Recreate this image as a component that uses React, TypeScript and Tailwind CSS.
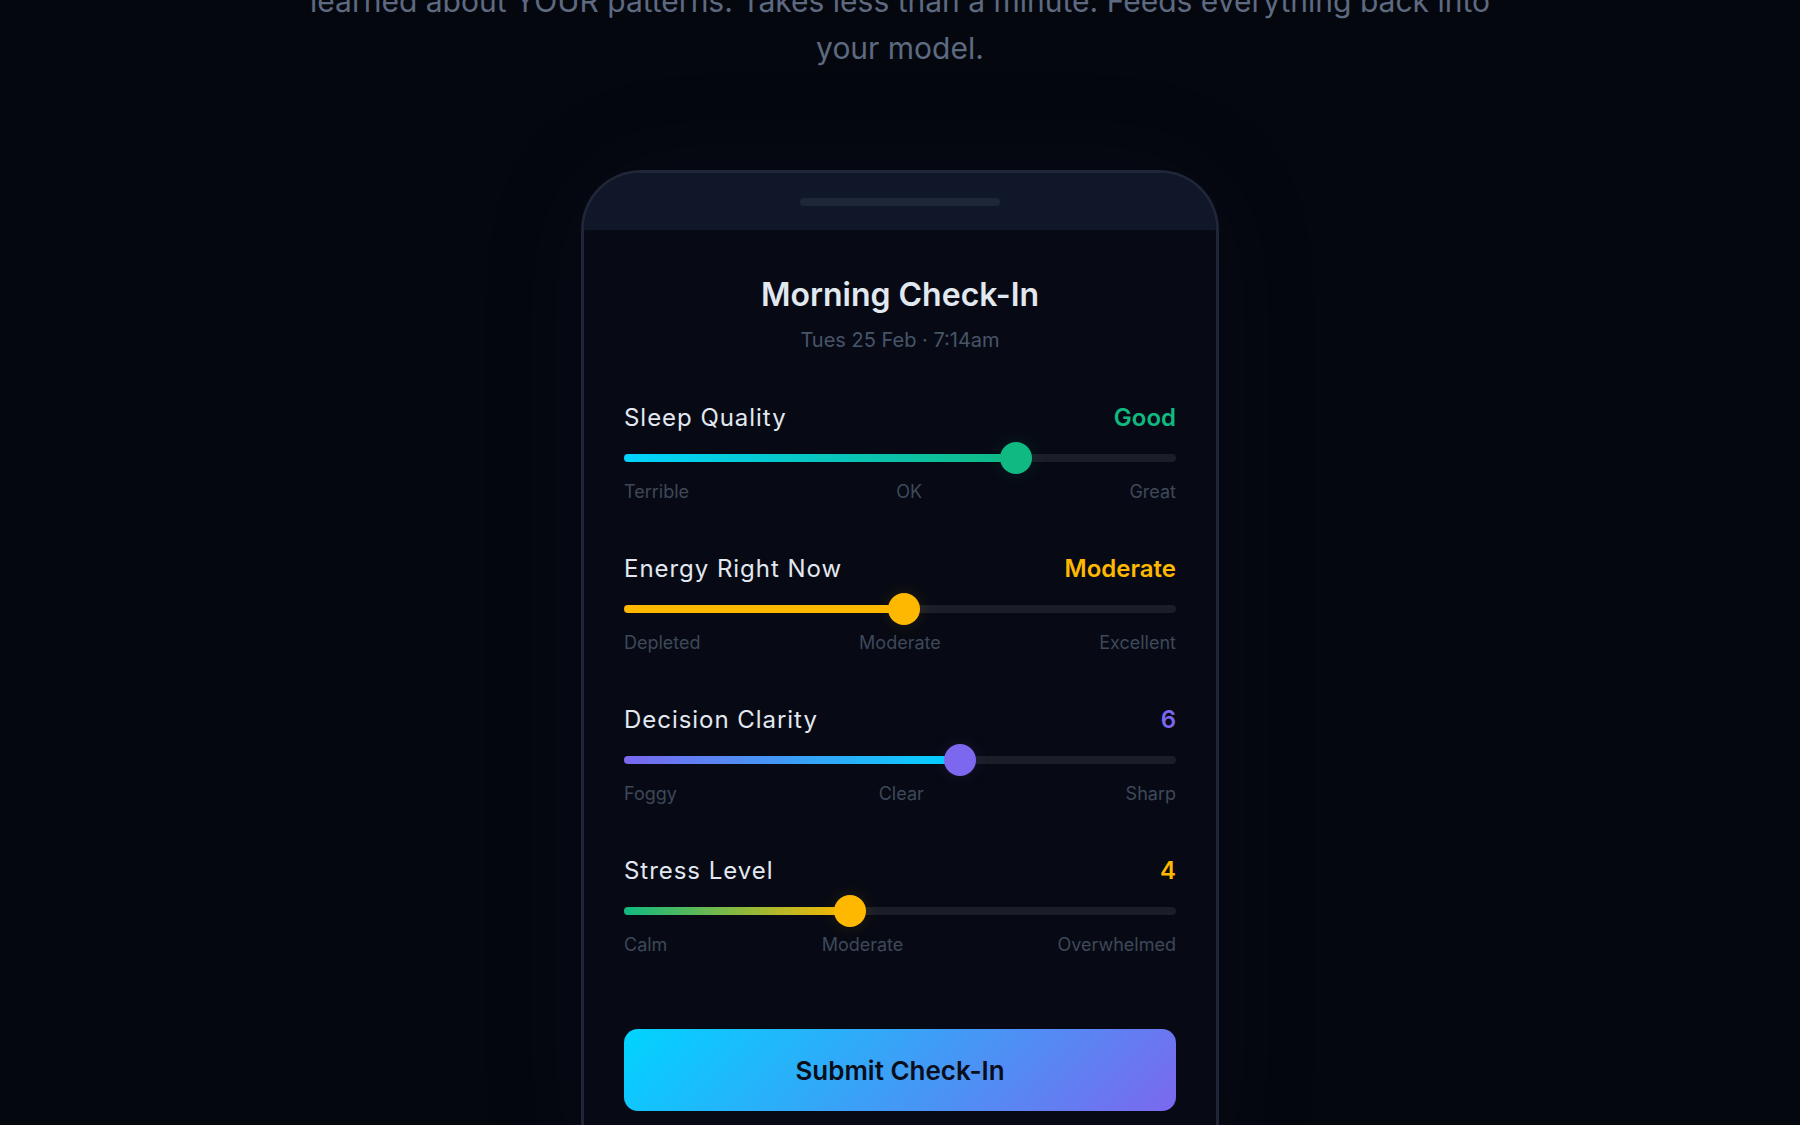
import React from 'react';

type Metric = {
  label: string;
  value: string;
  valueClass: string;
  pct: number;
  fillClass: string;
  thumbClass: string;
  ticks: [string, string, string];
};

const metrics: Metric[] = [
  {
    label: 'Sleep Quality',
    value: 'Good',
    valueClass: 'text-[#10b981]',
    pct: 71,
    fillClass: 'bg-[linear-gradient(90deg,#00d4ff,#10b981)]',
    thumbClass: 'bg-[#10b981] shadow-[0_0_18px_rgba(16,185,129,0.12)]',
    ticks: ['Terrible', 'OK', 'Great'],
  },
  {
    label: 'Energy Right Now',
    value: 'Moderate',
    valueClass: 'text-[#ffb800]',
    pct: 50.7,
    fillClass: 'bg-[#ffb800]',
    thumbClass: 'bg-[#ffb800] shadow-[0_0_18px_rgba(255,184,0,0.12)]',
    ticks: ['Depleted', 'Moderate', 'Excellent'],
  },
  {
    label: 'Decision Clarity',
    value: '6',
    valueClass: 'text-[#7b68ee]',
    pct: 60.9,
    fillClass: 'bg-[linear-gradient(90deg,#7b68ee,#00d4ff)]',
    thumbClass: 'bg-[#7b68ee] shadow-[0_0_18px_rgba(123,104,238,0.12)]',
    ticks: ['Foggy', 'Clear', 'Sharp'],
  },
  {
    label: 'Stress Level',
    value: '4',
    valueClass: 'text-[#ffb800]',
    pct: 41,
    fillClass: 'bg-[linear-gradient(90deg,#10b981,#ffb800)]',
    thumbClass: 'bg-[#ffb800] shadow-[0_0_18px_rgba(255,184,0,0.12)]',
    ticks: ['Calm', 'Moderate', 'Overwhelmed'],
  },
];

const Slider = ({ m }: { m: Metric }) => (
  <div>
    <div className="flex items-center justify-between h-8">
      <span className="text-[24px] leading-8 tracking-[0.04em] text-[#e2e8f0]">{m.label}</span>
      <span className={`text-[24px] leading-8 font-semibold ${m.valueClass}`}>{m.value}</span>
    </div>

    {/* track */}
    <div className="mt-2 h-8 flex items-center">
      <div className="relative w-full h-2 rounded-full bg-[#1b1e29]">
        <div
          className={`absolute left-0 top-0 h-full rounded-full ${m.fillClass}`}
          style={{ width: `${m.pct}%` }}
        />
        <div
          className={`absolute top-1/2 w-8 h-8 rounded-full -translate-x-1/2 -translate-y-1/2 ${m.thumbClass}`}
          style={{ left: `${m.pct}%` }}
        />
      </div>
    </div>

    <div className="mt-1.5 flex justify-between text-[18px] leading-6 text-[#3e4859]">
      {m.ticks.map((t) => (
        <span key={t}>{t}</span>
      ))}
    </div>
  </div>
);

export default function App() {
  return (
    <div
      className="h-screen overflow-hidden bg-[#05070f]"
      style={{ fontFamily: 'Inter, "Noto Sans", sans-serif' }}
    >
      <p className="-mt-[22px] mx-auto max-w-[1200px] text-center text-[30px] leading-[47px] text-[#5d6a80]">
        learned about YOUR patterns. Takes less than a minute. Feeds everything back into your model.
      </p>

      {/* phone */}
      <div className="mt-[98px] mx-auto w-[638px] rounded-t-[60px] border-[3px] border-b-0 border-[#1e2637] bg-[#070a14] overflow-hidden shadow-[0_0_120px_rgba(40,60,120,0.08)]">
        <div className="h-[57px] bg-[#0f1729] flex justify-center pt-[25px]">
          <div className="w-[200px] h-2 rounded-full bg-[#1e2738]" />
        </div>

        <div className="px-10 pt-[45px] pb-16">
          <h1 className="text-center text-[32px] leading-10 font-semibold text-[#e2e8f0]">
            Morning Check-In
          </h1>
          <p className="mt-[11px] text-center text-[20px] leading-7 text-[#475569]">
            Tues 25 Feb · 7:14am
          </p>

          <div className="mt-[48px] flex flex-col gap-[49px]">
            {metrics.map((m) => (
              <Slider key={m.label} m={m} />
            ))}
          </div>

          <button
            type="button"
            className="mt-[72px] w-full h-[82px] rounded-[14px] bg-[linear-gradient(135deg,#00d4ff,#7b68ee)] text-[26px] font-semibold text-[#0a0e1a]"
          >
            Submit Check-In
          </button>
        </div>
      </div>
    </div>
  );
}
